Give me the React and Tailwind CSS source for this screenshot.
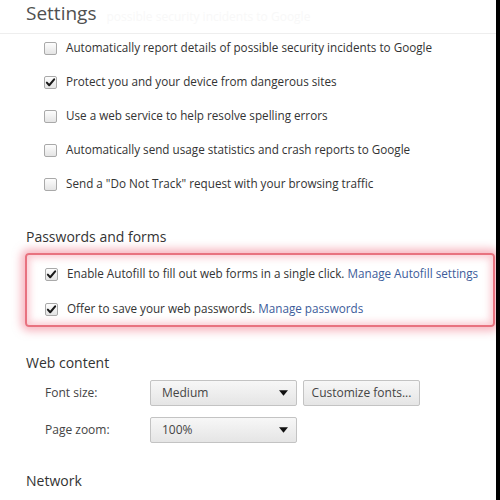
import { useState } from "react";

const FONT = { fontFamily: '"Open Sans", "Noto Sans", sans-serif' };

function Check({ checked }) {
  return (
    <span className="flex h-[13px] w-[13px] shrink-0 items-center justify-center rounded-[2px] border border-[#a9a9a9] bg-gradient-to-b from-[#fdfdfd] to-[#e4e4e4]">
      {checked && (
        <svg viewBox="0 0 12 12" className="h-[11px] w-[11px]">
          <path d="M2 6.2 L4.6 9 L10 2.6" fill="none" stroke="#1a1a1a" strokeWidth="2.2" strokeLinecap="round" strokeLinejoin="round" />
        </svg>
      )}
    </span>
  );
}

function Row({ checked, children }) {
  return (
    <div className="flex h-[24px] items-center gap-[9px] pl-[18px] text-[11.7px] text-[#333]">
      <Check checked={checked} />
      <span className="whitespace-nowrap">{children}</span>
    </div>
  );
}

function Select({ value }) {
  return (
    <div className="flex h-[26px] w-[147px] items-center justify-between rounded-[2px] border border-[#c3c3c3] bg-gradient-to-b from-[#f7f7f7] to-[#e5e5e5] pl-[11px] pr-[8px] text-[12px] text-[#444]">
      <span>{value}</span>
      <svg viewBox="0 0 10 6" className="h-[6px] w-[9px]">
        <path d="M0 0 H10 L5 6 Z" fill="#111" />
      </svg>
    </div>
  );
}

export default function App() {
  const [fontSize] = useState("Medium");
  const [zoom] = useState("100%");

  return (
    <div className="flex h-[500px] w-[500px] overflow-hidden bg-white" style={FONT}>
      <div className="flex flex-1 flex-col">
        <div className="flex h-[34px] items-start border-b border-[#eeeeee] pl-[26px]">
          <span className="mt-[-1px] text-[19px] leading-[28px] text-[#505050]">Settings</span>
          <span className="ml-[10px] mt-[8px] text-[12px] text-[#f8f8f8]">possible security incidents to Google</span>
        </div>

        <div className="mt-[2px] flex flex-col gap-[10px] pl-[26px]">
          <Row>Automatically report details of possible security incidents to Google</Row>
          <Row checked>Protect you and your device from dangerous sites</Row>
          <Row>Use a web service to help resolve spelling errors</Row>
          <Row>Automatically send usage statistics and crash reports to Google</Row>
          <Row>Send a "Do Not Track" request with your browsing traffic</Row>
        </div>

        <div className="mt-[30px] flex h-[20px] items-center pl-[26px] text-[14px] text-[#333]">Passwords and forms</div>

        <div className="ml-[25px] mr-[1px] mt-[7px] flex flex-col gap-[11px] rounded-[4px] border-2 border-[#e8727f] pb-[4px] pt-[7px] shadow-[0_0_9px_4px_rgba(240,110,130,0.5),inset_0_0_7px_3px_rgba(240,110,130,0.35)]">
          <Row checked>
            Enable Autofill to fill out web forms in a single click.{" "}
            <span className="text-[#3d5c9a]">Manage Autofill settings</span>
          </Row>
          <Row checked>
            Offer to save your web passwords.{" "}
            <span className="text-[#3d5c9a]">Manage passwords</span>
          </Row>
        </div>

        <div className="mt-[25px] flex h-[20px] items-center pl-[26px] text-[14px] text-[#333]">Web content</div>

        <div className="mt-[8px] flex flex-col gap-[11px] pl-[45px] text-[12px] text-[#444]">
          <div className="flex items-center">
            <span className="w-[105px]">Font size:</span>
            <Select value={fontSize} />
            <button className="ml-[6px] flex h-[26px] w-[117px] items-center justify-center rounded-[2px] border border-[#c3c3c3] bg-gradient-to-b from-[#f7f7f7] to-[#e5e5e5] text-[12px] text-[#444]">
              Customize fonts...
            </button>
          </div>
          <div className="flex items-center">
            <span className="w-[105px]">Page zoom:</span>
            <Select value={zoom} />
          </div>
        </div>

        <div className="mt-[27px] flex h-[20px] items-center pl-[26px] text-[14px] text-[#333]">Network</div>
      </div>
      <div className="w-[4px] bg-black" />
    </div>
  );
}
